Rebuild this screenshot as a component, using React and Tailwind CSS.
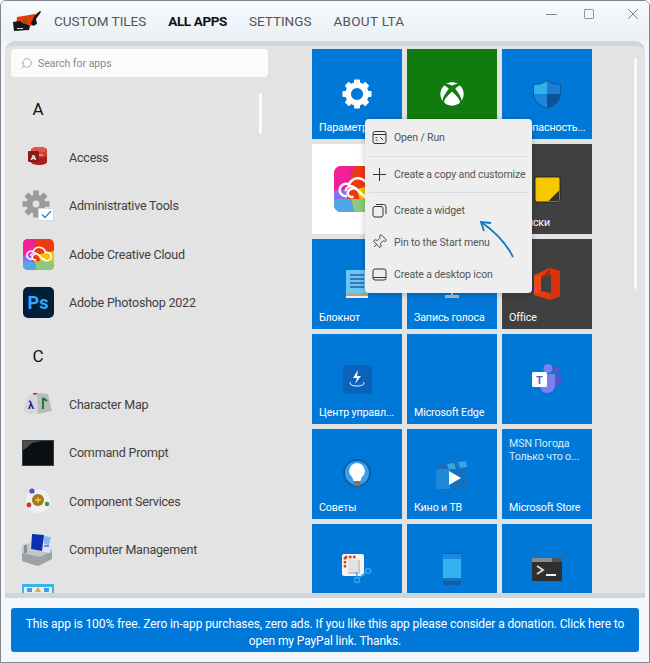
import React from "react";
import { FaXbox } from "react-icons/fa";
import { Minus, Square, X, Search, Pin } from "lucide-react";

function Gear({ size = 30, color = "#fff", hole = 9.5, sw = 6 }) {
  return (
    <svg width={size} height={size} viewBox="0 0 32 32">
      <circle cx="16" cy="16" r={hole} fill="none" stroke={color} strokeWidth={sw} />
      {[0, 45, 90, 135, 180, 225, 270, 315].map((a) => (
        <rect key={a} x="12.8" y="0.5" width="6.4" height="6" rx="1" fill={color} transform={`rotate(${a} 16 16)`} />
      ))}
    </svg>
  );
}

function Access() {
  return (
    <svg width="32" height="32" viewBox="0 0 32 32">
      <path d="M9 9c0-2 4-3 8-3s8 1 8 3v12c0 2-4 3-8 3s-8-1-8-3z" fill="#a8201a" />
      <path d="M9 9c0-2 4-3 8-3s8 1 8 3-4 3-8 3-8-1-8-3z" fill="#e8544c" />
      <path d="M9 10c2 2 14 2 16 0v5c-2 2-14 2-16 0z" fill="#c9403a" />
      <rect x="17" y="13.5" width="4" height="1.2" fill="#f3b5b0" />
      <rect x="6" y="10" width="11" height="11" rx="1" fill="#8c1c17" />
      <text x="11.5" y="19" fontSize="8" fontWeight="700" fill="#fff" textAnchor="middle" fontFamily="Roboto, sans-serif">A</text>
    </svg>
  );
}

function AdminTools() {
  return (
    <div className="relative w-[32px] h-[32px]">
      <Gear size={28} color="#9b9b9b" hole={7.5} sw={7} />
      <div className="absolute right-[0px] bottom-[1px] w-[16px] h-[13px] bg-white rounded-[1px] border border-[#d8d8d8] flex items-center justify-center">
        <svg width="11" height="9" viewBox="0 0 11 9"><path d="M1 4.5 4 7.5 10 1" fill="none" stroke="#1a86e0" strokeWidth="1.3" /></svg>
      </div>
    </div>
  );
}

function CC({ size = 31, id = "cc" }) {
  return (
    <svg width={size} height={size} viewBox="0 0 32 32">
      <defs><clipPath id={id}><rect width="32" height="32" rx="5" /></clipPath></defs>
      <g clipPath={`url(#${id})`}>
        <rect width="32" height="32" fill="#ee3a10" />
        <polygon points="0,0 14,0 10,16 0,20" fill="#f51f9a" />
        <polygon points="8,0 15,0 12,6" fill="#e2258a" />
        <polygon points="32,12 32,24 18,24 16,16" fill="#fac400" />
        <polygon points="0,17 10,16 9,24 0,24" fill="#8b6df0" />
        <polygon points="0,23 12,23 14,32 0,32" fill="#4fa7e6" />
        <polygon points="12,23 32,23 32,32 14,32" fill="#8ccb7e" />
      </g>
      <path d="M9 21c-4 0-5.500-3-5-5 .6-3 4-4.500 6.500-3 1-3.500 5-5.500 8.500-4 2.500 1 4 3 4 5 3-1 6 1 6 4s-2.500 4.500-5 4.500c-4 0-7-7-10-7s-4.500 2-4.500 3.500 1.500 3 4 2.500" fill="none" stroke="#fff" strokeWidth="1.7" />
      <path d="M8 17.500c0-2 2-3.500 4-3.500 4 0 6 7 11 7" fill="none" stroke="#fff" strokeWidth="1.4" />
    </svg>
  );
}

function Ps() {
  return (
    <div className="w-[31px] h-[31px] rounded-[5px] bg-[#001e36] flex items-center justify-center text-[#31a8ff] font-bold text-[18px] leading-none">
      Ps
    </div>
  );
}

function CharMap() {
  return (
    <svg width="32" height="24" viewBox="0 0 32 24">
      <polygon points="1,19 6,3 15,1 16,22 7,22" fill="#d4d8dc" />
      <polygon points="15,1 26,2 30,19 16,22" fill="#b8bcb8" />
      <rect x="11" y="1" width="4" height="1.500" fill="#d02020" />
      <text x="9" y="17" fontSize="11" fontWeight="700" fill="#1e2a80" textAnchor="middle">λ</text>
      <path d="M21 6v11M21 6l4 3" stroke="#1a7a2a" strokeWidth="2" fill="none" />
    </svg>
  );
}

function Cmd() {
  return (
    <svg width="32" height="26" viewBox="0 0 32 26">
      <rect x="0.500" y="0.500" width="31" height="25" fill="#0a0f14" stroke="#3a3f44" />
      <polygon points="1,1 20,1 10,3 3,9 1,10" fill="#4b4f52" />
    </svg>
  );
}

function CompServ() {
  return (
    <svg width="28" height="28" viewBox="0 0 28 28">
      <circle cx="14" cy="14" r="12" fill="#eef0f2" />
      <circle cx="14" cy="13" r="6" fill="#a5761c" />
      <path d="M11 13h6M14 10v6" stroke="#f2c94c" strokeWidth="1.300" />
      <circle cx="8" cy="4" r="2.600" fill="#4a55c0" />
      <circle cx="5" cy="18" r="2.400" fill="#c8392f" />
      <circle cx="23" cy="17" r="2.200" fill="#2f9a3a" />
    </svg>
  );
}

function CompMgmt() {
  return (
    <svg width="32" height="34" viewBox="0 0 32 34">
      <polygon points="0,12 8,10 30,16 30,26 16,33 0,28" fill="#c3c6c8" />
      <polygon points="0,20 18,24 30,18 30,26 16,33 0,28" fill="#9ea2a4" />
      <rect x="2" y="12" width="3" height="8" fill="#8c8f91" />
      <polygon points="9,0 30,3 28,20 8,16" fill="#dbe5f0" />
      <polygon points="10,1 22,2 20,18 9,16" fill="#0c2fb0" />
      <polygon points="22,3 29,4 27,12 22,11" fill="#8fb6e8" />
      <rect x="22" y="12" width="5" height="2" fill="#5f8fd8" />
    </svg>
  );
}

function NextIcon() {
  return (
    <svg width="32" height="32" viewBox="0 0 32 32" className="translate-y-[2px]">
      <rect x="0" y="0" width="32" height="28" fill="#3db1ea" />
      <rect x="2" y="3" width="28" height="24" fill="#dff0fa" />
      <rect x="5" y="4" width="5" height="4" fill="#4d9ad8" />
      <polygon points="13,8 16,3 19,8" fill="#f0a020" />
      <rect x="22" y="4" width="5" height="4" fill="#4d9ad8" />
    </svg>
  );
}

function Shield() {
  return (
    <svg width="30" height="30" viewBox="0 0 30 30">
      <path d="M15 1C11 4 6 5 1 5v10c0 7 6 12 14 15 8-3 14-8 14-15V5c-5 0-10-1-14-4z" fill="#0c59a4" />
      <path d="M15 2C11 5 6 6 2 6v9h13z" fill="#2fb2ee" />
      <path d="M15 2c4 3 9 4 13 4v9H15z" fill="#1b7fd4" />
      <path d="M2 15h13v14C8 26 2 22 2 15z" fill="#1a86dc" />
      <path d="M28 15H15v14c7-3 13-7 13-14z" fill="#0e5296" />
    </svg>
  );
}

function Sticky() {
  return (
    <svg width="27" height="27" viewBox="0 0 28 28">
      <rect x="1" y="1" width="26" height="26" rx="2" fill="#f5c800" stroke="#222" strokeWidth="1" />
      <polygon points="26,15 26,26 15,26" fill="#333" />
    </svg>
  );
}

function Notepad() {
  return (
    <svg width="24" height="30" viewBox="0 0 24 30">
      <rect x="1" y="1" width="22" height="26" rx="1" fill="#6ac7f5" />
      <path d="M5 6h14M5 10h14M5 14h14M5 18h14" stroke="#2a5f9e" strokeWidth="1.300" />
      <rect x="1" y="24" width="22" height="3" fill="#c9a06c" />
      <rect x="1" y="27" width="22" height="2" fill="#f0f0f0" />
    </svg>
  );
}

function Mic() {
  return (
    <svg width="26" height="30" viewBox="0 0 26 30">
      <rect x="8" y="1" width="10" height="18" rx="5" fill="#cfe4f7" />
      <rect x="12" y="20" width="2" height="7" fill="#b9c9d8" />
      <rect x="6" y="26" width="14" height="3" fill="#a8b9c8" />
    </svg>
  );
}

function Office() {
  return (
    <svg width="28" height="32" viewBox="0 0 28 32">
      <path d="M17 0 27 3v25l-10 4L1 27 1 7z" fill="#e8380d" />
      <path d="M17 0 27 3v25l-10 4z" fill="#d8330b" />
      <path d="M8 9 18 7v18L8 23z" fill="#404040" />
      <path d="M1 7 8 9v14l-7 4z" fill="#ea4a18" />
      <path d="M1 18l3 2-3 4z" fill="#e8488c" />
      <path d="M8 9 17 1v6z" fill="#a82606" />
    </svg>
  );
}

function ActionCenter() {
  return (
    <div className="w-[29px] h-[29px] bg-[#0a63b8] rounded-[2px] flex items-center justify-center">
      <svg width="18" height="20" viewBox="0 0 18 20">
        <path d="M10 1 5 9h4l-2 6 6-8H9z" fill="#fff" />
        <path d="M3 13c-3 2 1 4 6 4s9-2 6-4" fill="none" stroke="#fff" strokeWidth="1" />
      </svg>
    </div>
  );
}

function Teams() {
  return (
    <svg width="30" height="30" viewBox="0 0 30 30">
      <circle cx="24" cy="6" r="3.500" fill="#5059c9" />
      <rect x="19" y="11" width="10" height="11" rx="3" fill="#5059c9" />
      <circle cx="16" cy="4.500" r="4.500" fill="#7b83eb" />
      <path d="M8 10h15v11c0 5-4 8-8 8s-7-3-7-8z" fill="#7b83eb" />
      <rect x="0" y="8" width="15" height="15" rx="1.500" fill="#fff" />
      <text x="7.500" y="20" fontSize="11" fontWeight="700" fill="#5b5fc7" textAnchor="middle" fontFamily="Roboto, sans-serif">T</text>
    </svg>
  );
}

function Tips() {
  return (
    <svg width="30" height="30" viewBox="0 0 30 30">
      <circle cx="15" cy="14" r="14" fill="#0e5ea8" />
      <circle cx="15" cy="14" r="12" fill="#38a0e6" />
      <path d="M15 4a8 8 0 0 0-5 14c1 1 1 3 1.500 4h7c.5-1 .5-3 1.500-4a8 8 0 0 0-5-14z" fill="#fff" />
      <rect x="11.500" y="22" width="7" height="5" rx="1" fill="#777" />
    </svg>
  );
}

function Movies() {
  return (
    <svg width="34" height="31" viewBox="0 0 34 31">
      <polygon points="2,6 32,1 33,9 3,13" fill="#1a6fbe" />
      <polygon points="12,5 19,4 21,10 14,11" fill="#34a6ea" />
      <polygon points="23,3 31,2 32,8 25,9" fill="#34a6ea" />
      <rect x="1" y="10" width="32" height="20" rx="2" fill="#1f88d8" />
      <rect x="15" y="10" width="18" height="20" fill="#1670c0" />
      <polygon points="14,12 14,26 26,19" fill="#fff" />
    </svg>
  );
}

function Snip() {
  return (
    <svg width="30" height="30" viewBox="0 0 30 30">
      <rect x="0" y="0" width="22" height="22" rx="2" fill="#f4f4f4" />
      <path d="M3 3h11M3 3v11" stroke="#e8340c" strokeWidth="2.500" strokeDasharray="2.500 1.500" fill="none" />
      <rect x="6" y="6" width="12" height="14" fill="#c8c8c8" />
      <rect x="6" y="6" width="10" height="12" fill="#e2e2e2" />
      <circle cx="26" cy="17" r="2.500" fill="none" stroke="#38a0e6" strokeWidth="1.500" />
      <circle cx="15" cy="26" r="2.500" fill="none" stroke="#38a0e6" strokeWidth="1.500" />
      <path d="M24 18 17 24M14 18l2 6" stroke="#38a0e6" strokeWidth="1.300" />
    </svg>
  );
}

function Phone() {
  return (
    <svg width="20" height="32" viewBox="0 0 20 32">
      <rect x="1" y="0" width="18" height="32" rx="2.500" fill="#0e5ea8" />
      <rect x="1" y="1" width="18" height="24" fill="#35b0f0" />
      <rect x="1" y="1" width="18" height="5" fill="#1c8ad6" />
      <rect x="1" y="25" width="18" height="3" fill="#1a70c0" />
    </svg>
  );
}

function Terminal() {
  return (
    <svg width="30" height="23" viewBox="0 0 30 23">
      <rect x="0" y="0" width="30" height="23" rx="1.500" fill="#2f2f2f" />
      <rect x="0" y="0" width="30" height="4" fill="#8a8a8a" />
      <rect x="20" y="0" width="10" height="4" fill="#555" />
      <path d="M5 8l6 4-6 4" fill="none" stroke="#d8d8d8" strokeWidth="2" />
      <rect x="14" y="16" width="10" height="2" fill="#f2f2f2" />
    </svg>
  );
}

function Logo() {
  return (
    <svg width="28" height="20" viewBox="0 0 28 20">
      <polygon points="4,6 22,3 22,13 15,16 3,15" fill="#e9390e" />
      <polygon points="0,11 6,10 17,15 16,19 1,20" fill="#181818" />
      <rect x="10" y="9" width="4" height="4" fill="#7d5a20" />
      <polygon points="22,4 27,0 28,1 23,8 24,13 20,15 18,12" fill="#161616" />
      <rect x="4" y="17" width="6" height="1" fill="#ddd" />
    </svg>
  );
}

const APPS_A = [
  ["Access", <Access />],
  ["Administrative Tools", <AdminTools />],
  ["Adobe Creative Cloud", <CC id="cc1" />],
  ["Adobe Photoshop 2022", <Ps />],
];
const APPS_C = [
  ["Character Map", <CharMap />],
  ["Command Prompt", <Cmd />],
  ["Component Services", <CompServ />],
  ["Computer Management", <CompMgmt />],
  ["", <NextIcon />],
];

function AppRow({ name, icon }) {
  return (
    <div className="h-[48.5px] flex items-center shrink-0">
      <div className="w-[32px] flex justify-center shrink-0">{icon}</div>
      <span className="ml-[15px] pt-[2px] text-[12.5px] tracking-[-0.2px] text-[#404040]">{name}</span>
    </div>
  );
}

function Group({ letter, className }) {
  return (
    <div className={"w-[42px] h-[43px] mb-[2px] -ml-[5px] bg-[#e4e4e4] flex items-center justify-center text-[#111] text-[17px] " + className}>
      {letter}
    </div>
  );
}

function Tile({ label, icon, bg = "bg-[#0078d7]", text = "text-white", top }) {
  return (
    <div className={"relative w-[90px] h-[90px] flex items-center justify-center " + bg}>
      {icon}
      {top && (
        <div className="absolute left-[7px] top-[8px] text-[10.7px] tracking-[-0.15px] leading-[13px] text-[#d8ebfa] whitespace-pre">{top}</div>
      )}
      {label && (
        <div className={"absolute left-[7px] bottom-[4px] text-[10.7px] tracking-[-0.15px] leading-[15px] whitespace-nowrap " + text}>{label}</div>
      )}
    </div>
  );
}

function MenuItem({ icon, label, h }) {
  return (
    <div className={"flex items-center pl-[6px] " + h}>
      <div className="w-[16px] flex justify-center shrink-0">{icon}</div>
      <span className="ml-[7px] pt-[1px] text-[10.5px] tracking-[-0.13px] text-[#555] whitespace-nowrap">{label}</span>
    </div>
  );
}

export default function App() {
  return (
    <div className="relative w-[650px] h-[663px] overflow-hidden flex flex-col bg-[#f3f7fc] border border-[#80878c] rounded-t-[6px] font-['Roboto',sans-serif]">
      <header className="h-[40px] shrink-0 flex items-center bg-gradient-to-b from-[#f7fafd] to-[#eaf0f6]">
        <div className="ml-[12px] w-[28px]"><Logo /></div>
        <nav className="ml-[13px] flex gap-[22px] text-[13.5px] text-[#555]">
          <span>CUSTOM TILES</span>
          <span className="font-bold tracking-[-0.4px] text-[#111]">ALL APPS</span>
          <span>SETTINGS</span>
          <span className="tracking-[0.3px]">ABOUT LTA</span>
        </nav>
        <div className="ml-auto self-start mt-[4px] flex items-center gap-[22px] pr-[7px] text-[#444]">
          <Minus size={17} strokeWidth={0.9} />
          <Square size={12} strokeWidth={1.1} className="ml-[1px]" />
          <X size={18} strokeWidth={0.9} className="ml-[7px]" />
        </div>
      </header>

      <main className="relative mx-[4px] h-[557px] shrink-0 flex overflow-hidden bg-[#e3e3e3] rounded-t-[10px] border-y-[5px] border-[#d2d6d9]">
        <div className="w-[307px] shrink-0 flex flex-col">
          <div className="relative ml-[6px] mt-[3px] w-[257px] h-[28px] shrink-0 rounded-[4px] bg-[#fbfbfb] flex items-center pl-[9px] text-[#8a8a8a]">
            <Search size={13} strokeWidth={1.2} className="-scale-x-100" />
            <span className="ml-[5px] pt-[1px] text-[10.5px]">Search for apps</span>
          </div>
          <div className="pl-[17px] flex flex-col">
            <Group letter="A" className="mt-[11px]" />
            {APPS_A.map(([n, i]) => <AppRow key={n} name={n} icon={i} />)}
            <Group letter="C" className="mt-[8px]" />
            {APPS_C.map(([n, i], k) => <AppRow key={k} name={n} icon={i} />)}
          </div>
        </div>
        <div className="absolute left-[254px] top-[47px] w-[3px] h-[41px] rounded-full bg-[#fbfbfb]" />

        <div className="pt-[3px] grid grid-cols-[90px_90px_90px] gap-[5px] content-start">
          <Tile label="Параметры" icon={<Gear />} />
          <Tile bg="bg-[#107c10]" icon={<FaXbox size={24} color="#fff" />} />
          <Tile label="Безопасность..." icon={<Shield />} />
          <Tile bg="bg-white" icon={<CC size={46} id="cc2" />} />
          <Tile />
          <Tile label="Записки" bg="bg-[#404040]" icon={<Sticky />} />
          <Tile label="Блокнот" icon={<Notepad />} />
          <Tile label="Запись голоса" icon={<Mic />} />
          <Tile label="Office" bg="bg-[#404040]" icon={<Office />} />
          <Tile label="Центр управл..." icon={<ActionCenter />} />
          <Tile label="Microsoft Edge" />
          <Tile icon={<Teams />} />
          <Tile label="Советы" icon={<Tips />} />
          <Tile label="Кино и ТВ" icon={<Movies />} />
          <Tile label="Microsoft Store" top={"MSN Погода\nТолько что о..."} />
          <Tile icon={<Snip />} />
          <Tile icon={<Phone />} />
          <Tile icon={<Terminal />} />
        </div>
        <div className="absolute left-[629px] top-[12px] w-[3px] h-[231px] rounded-full bg-[#f8f8f8]" />
      </main>

      <div className="mx-[10px] mt-[10px] h-[44px] pt-[6px] rounded-[3px] bg-[#0078d7] text-white text-[12px] tracking-[-0.1px] leading-[17px] text-center shrink-0 flex flex-col justify-center whitespace-nowrap">
        <span>This app is 100% free. Zero in-app purchases, zero ads. If you like this app please consider a donation. Click here to</span>
        <span>open my PayPal link. Thanks.</span>
      </div>

      <div className="absolute left-[364px] top-[118px] w-[167px] h-[174px] rounded-[4px] bg-[#eeeeee] shadow-[0_1px_6px_rgba(0,0,0,0.25)] flex flex-col">
        <MenuItem h="h-[37px]" label="Open / Run" icon={
          <svg width="15" height="15" viewBox="0 0 15 15" fill="none" stroke="#333"><rect x="1" y="1.500" width="13" height="12" rx="2" /><path d="M1 4.500h13" /><path d="M3.500 7.500h2M3.500 10h2M8 7l3 3" strokeWidth=".9" /></svg>
        } />
        <div className="mx-[4px] h-px bg-[#dcdfe2]" />
        <MenuItem h="h-[35px]" label="Create a copy and customize" icon={
          <svg width="13" height="13" viewBox="0 0 13 13" fill="none" stroke="#333"><path d="M6.500 0v13M0 6.500h13" /></svg>
        } />
        <div className="mx-[4px] h-px bg-[#d6dde2]" />
        <MenuItem h="h-[35px]" label="Create a widget" icon={
          <svg width="15" height="15" viewBox="0 0 15 15" fill="none" stroke="#333"><rect x="1" y="3.500" width="10" height="10.500" rx="2" /><path d="M4 1.500h7.500a2.500 2.500 0 0 1 2.500 2.500v7" /></svg>
        } />
        <MenuItem h="h-[28px]" label="Pin to the Start menu" icon={<Pin size={16} strokeWidth={1.2} color="#222" className="rotate-45" />} />
        <MenuItem h="h-[36px]" label="Create a desktop icon" icon={
          <svg width="15" height="13" viewBox="0 0 15 13" fill="none" stroke="#333"><rect x="1" y="1" width="13" height="11" rx="2" /><path d="M1 9.500h13" /></svg>
        } />
      </div>

      <svg className="absolute left-[470px] top-[212px]" width="50" height="50" viewBox="0 0 50 50" fill="none" stroke="#1379c4" strokeWidth="1.800">
        <path d="M42 44C36 32 26 20 10 9" />
        <path d="M13 18 10 9 20 10" />
      </svg>
    </div>
  );
}
